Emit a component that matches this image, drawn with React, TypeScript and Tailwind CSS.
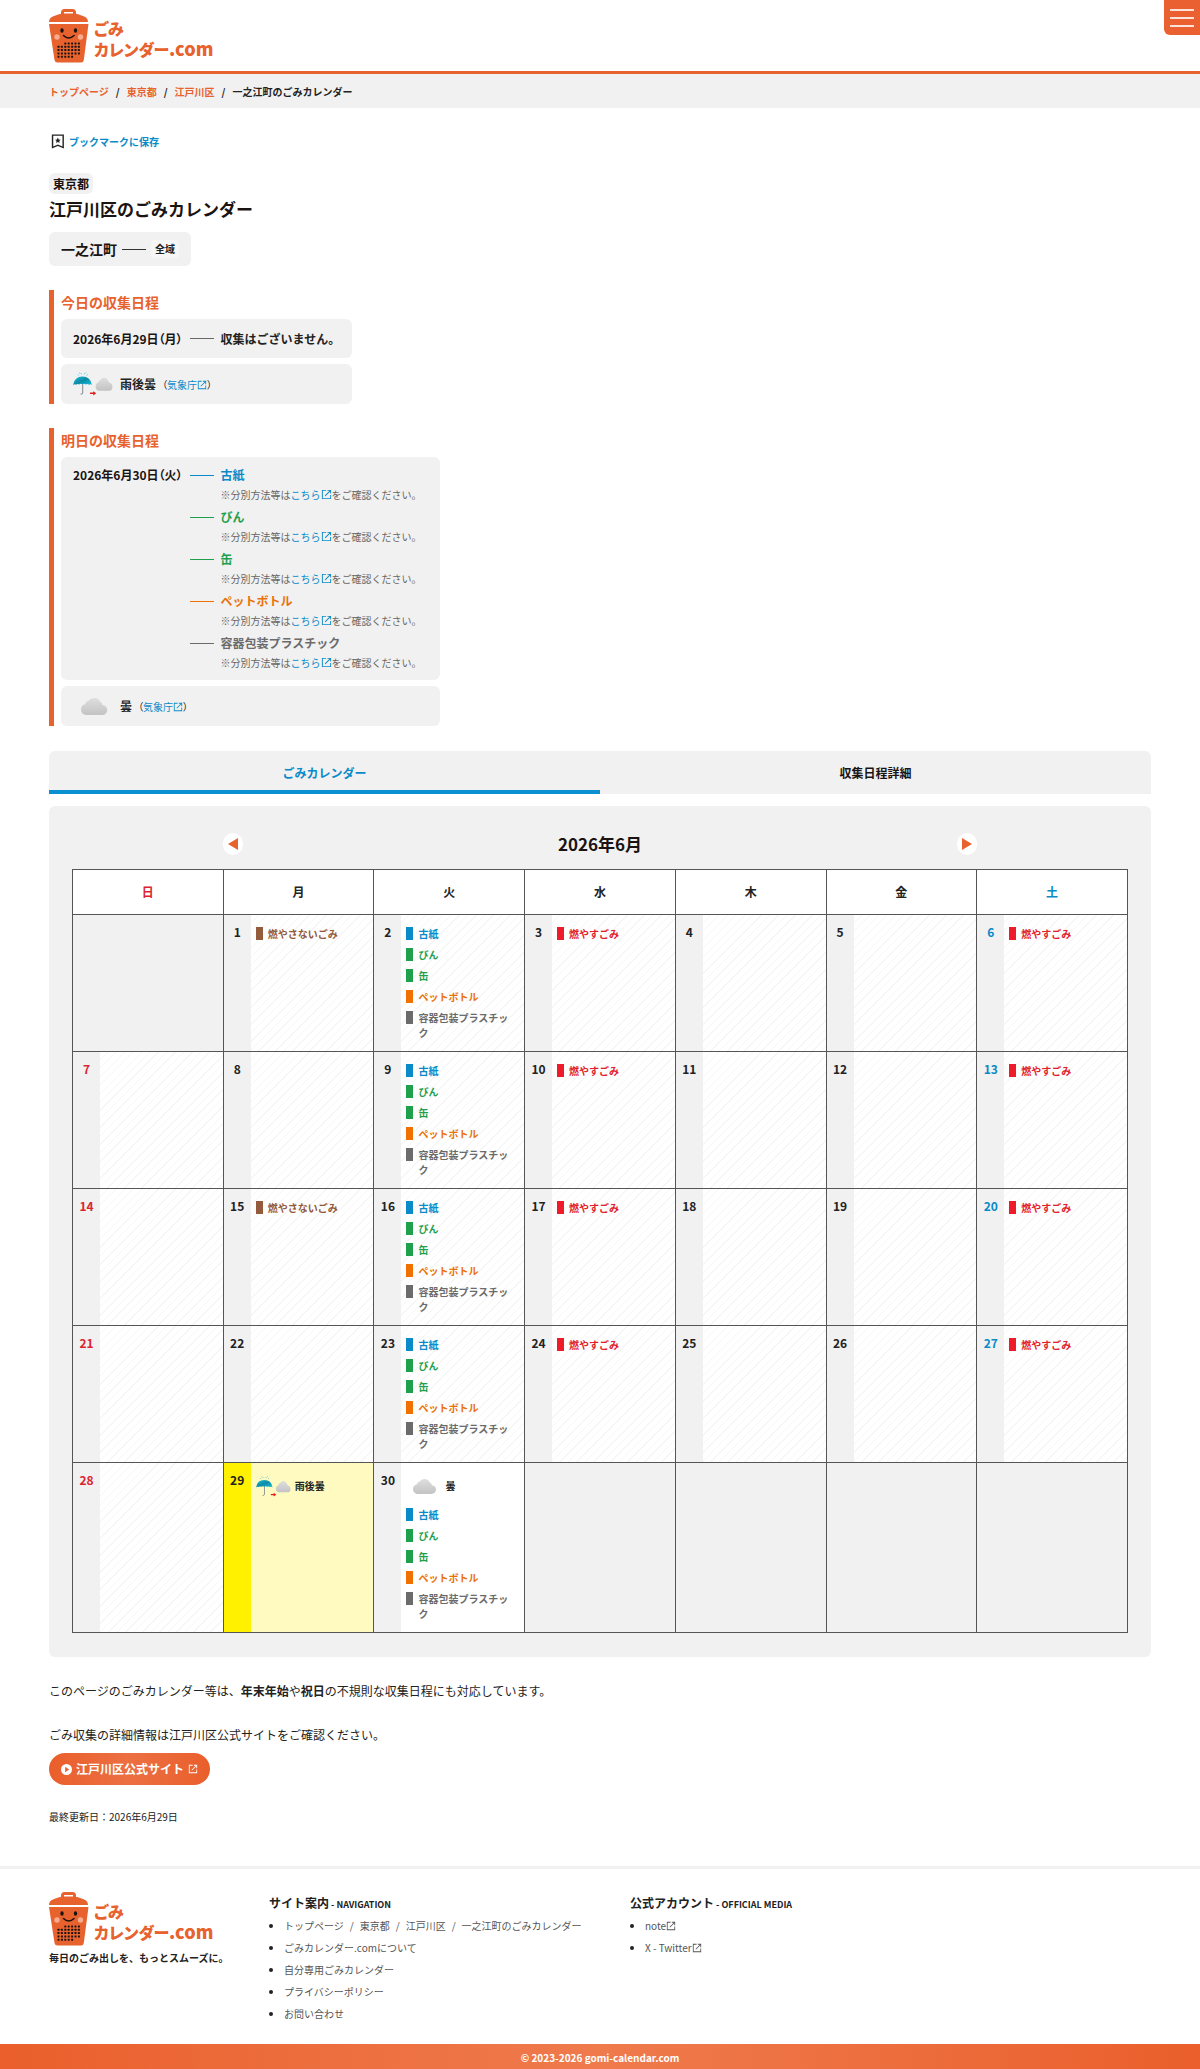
import { useState } from "react";
import type { ReactNode } from "react";

const FONT = "font-['Noto_Sans_CJK_JP',sans-serif]";

type Waste = { name: string; text: string; bar: string };

const PAPER: Waste = { name: "古紙", text: "text-[#0a8ac8]", bar: "bg-[#0a8ac8]" };
const BOTTLE: Waste = { name: "びん", text: "text-[#1fa04d]", bar: "bg-[#1fa04d]" };
const CAN: Waste = { name: "缶", text: "text-[#1fa04d]", bar: "bg-[#1fa04d]" };
const PET: Waste = { name: "ペットボトル", text: "text-[#ea7008]", bar: "bg-[#f07000]" };
const PLASTIC: Waste = { name: "容器包装プラスチック", text: "text-[#6b6b6b]", bar: "bg-[#6b6b6b]" };
const BURNABLE: Waste = { name: "燃やすごみ", text: "text-[#e2202c]", bar: "bg-[#ee1c2a]" };
const NON_BURNABLE: Waste = { name: "燃やさないごみ", text: "text-[#935a3b]", bar: "bg-[#935a3b]" };

const RECYCLE = [PAPER, BOTTLE, CAN, PET, PLASTIC];
const WEEKDAYS = ["日", "月", "火", "水", "木", "金", "土"];
const TODAY = 29;

const TABS = [
  { id: "calendar", label: "ごみカレンダー" },
  { id: "detail", label: "収集日程詳細" },
];

const CRUMBS = [
  { href: "#top", label: "トップページ" },
  { href: "#tokyo", label: "東京都" },
  { href: "#edogawa", label: "江戸川区" },
];

const NAV_LINKS = [
  { href: "#about", label: "ごみカレンダー.comについて" },
  { href: "#my", label: "自分専用ごみカレンダー" },
  { href: "#privacy", label: "プライバシーポリシー" },
  { href: "#contact", label: "お問い合わせ" },
];

// June 2026 starts on a Monday
const WEEKS = [0, 1, 2, 3, 4].map((w) =>
  [0, 1, 2, 3, 4, 5, 6].map((d) => w * 7 + d).map((n) => (n >= 1 && n <= 30 ? n : null))
);

function wasteFor(day: number): Waste[] {
  const weekday = day % 7;
  if (weekday === 2) return RECYCLE;
  if (weekday === 3 || weekday === 6) return [BURNABLE];
  if (day === 1 || day === 15) return [NON_BURNABLE];
  return [];
}

function dayColor(weekday: number) {
  if (weekday === 0) return "text-[#dc2430]";
  if (weekday === 6) return "text-[#0a8ac8]";
  return "text-[#222]";
}

function ExternalIcon({ className = "size-[10px]" }: { className?: string }) {
  return (
    <svg viewBox="0 0 24 24" fill="currentColor" className={`inline-block align-[-1px] ${className}`} aria-hidden="true">
      <path d="M22 22H2V2h9v2H4v16h16v-7h2zM14 2h8v8h-2V5.400L9.700 15.700l-1.400-1.400L18.600 4H14z" />
    </svg>
  );
}

function Logo() {
  return (
    <svg viewBox="0 0 168 56" className="block h-14 w-[168px]" role="img" aria-label="ごみカレンダー.com">
      <g fill="#e8622d">
        <path fillRule="evenodd" d="M12 6V3.500Q12 0 15.500 0h8Q27 0 27 3.500V6zM15 5h9V3h-9z" />
        <path d="M0 13Q0 8.500 5 7l5-1.800q2-.7 5-.7h9q3 0 5 .7L34 7q5 1.500 5 6z" />
        <path d="M0 15h39.500l-4.700 36Q34.500 53.500 32 53.500H8.500Q6 53.500 5.500 51z" />
      </g>
      <g fill="#1a1311">
        <ellipse cx="13" cy="21.500" rx="1.700" ry="2.300" />
        <ellipse cx="26.500" cy="21.500" rx="1.700" ry="2.300" />
        {[0, 1, 2, 3, 4].map((row) =>
          [0, 1, 2, 3, 4, 5, 6].map((col) =>
            (row === 0 && col < 2) || (row === 4 && col > 4) ? null : (
              <rect key={`${row}-${col}`} x={8.500 + col * 3.400} y={33.500 + row * 3.300} width="2" height="2" rx=".4" />
            )
          )
        )}
      </g>
      <path d="M14.500 26.500q5.200 5 10.500 0" fill="none" stroke="#1a1311" strokeWidth="1.600" strokeLinecap="round" />
      <circle cx="8" cy="28" r="2.700" fill="#f6ac8f" />
      <circle cx="31.500" cy="28" r="2.700" fill="#f6ac8f" />
      <g fill="#e8622d" className="font-['Noto_Sans_CJK_JP',sans-serif] font-black [font-feature-settings:'palt']">
        <text x="45" y="26" fontSize="16">ごみ</text>
        <text x="45" y="47" fontSize="16">カレンダー</text>
        <text x="120" y="47" fontSize="18">.com</text>
      </g>
    </svg>
  );
}

function Cloud() {
  return (
    <>
      <linearGradient id="cloud" x1="0" y1="0" x2="0" y2="1">
        <stop offset="0" stopColor="#dedede" />
        <stop offset="1" stopColor="#c3c3c3" />
      </linearGradient>
      <path
        fill="url(#cloud)"
        d="M5.500 18A5.500 5.500 0 0 1 5 7.300 5.500 5.500 0 0 1 9 3.500 6.500 6.500 0 0 1 20 4.500 5 5 0 0 1 22.500 8 5 5 0 0 1 22 18z"
      />
    </>
  );
}

function CloudyIcon({ className }: { className: string }) {
  return (
    <svg viewBox="0 0 40 24" className={className} role="img" aria-label="曇">
      <g transform="translate(7 3)">
        <Cloud />
      </g>
    </svg>
  );
}

function RainThenCloudyIcon({ className }: { className: string }) {
  return (
    <svg viewBox="0 0 40 24" className={className} role="img" aria-label="雨後曇">
      <linearGradient id="umbrella" x1="0" y1="0" x2="1" y2="1">
        <stop offset="0" stopColor="#12c4e0" />
        <stop offset=".5" stopColor="#0f8aa6" />
        <stop offset="1" stopColor="#12c4e0" />
      </linearGradient>
      <path d="M9.700 11v10q-.200 1.700-2.200 1" fill="none" stroke="#858b90" strokeWidth="1" />
      <path
        fill="url(#umbrella)"
        d="M0 13Q1.500 4.500 9.500 4.500T19 13q-1.500-1.300-3-.3-1.600-1.400-3.200-.3-1.600-1.400-3.300-.2-1.600-1.200-3.300.2-1.600-1.100-3.200.3-1.500-1-3 .3z"
      />
      <path d="M5 2.500l.6 1M8 1.200l.2 1M11.500 1.200l-.2 1M14.500 2.500l-.6 1M6.500.500v.8M13 .500v.8" stroke="#4fc3dc" strokeWidth=".9" />
      <path fill="#e0201c" d="M17 20.500h3.200v-1.300l3 2.100-3 2.100v-1.300H17z" />
      <g transform="translate(22 5) scale(.64 .76)">
        <Cloud />
      </g>
    </svg>
  );
}

// Full-width brackets set with their proportional widths
function Bracket({ children }: { children: string }) {
  return <span className="[font-feature-settings:'palt']">{children}</span>;
}

function WeatherRow({ icon, label }: { icon: ReactNode; label: string }) {
  return (
    <div className="flex h-10 items-center rounded-md bg-[#f1f1f1] px-3">
      {icon}
      <span className="ml-[7px] text-[12px] font-bold">{label}</span>
      <span className="ml-[6px] text-[10px]">
        <Bracket>（</Bracket>
        <a href="#jma" className="text-[#0a8ac8]">
          気象庁
          <ExternalIcon />
        </a>
        <Bracket>）</Bracket>
      </span>
    </div>
  );
}

function CalendarCell({ day, weekday }: { day: number | null; weekday: number }) {
  if (day === null) return <td className="border border-[#555] bg-[#f1f1f1]" />;

  const isToday = day === TODAY;
  const stripe = isToday ? "bg-[#fff100]" : "bg-[#f1f1f1]";
  let body = "bg-[repeating-linear-gradient(135deg,#fff_0_5px,#f6f6f6_5px_6px)]";
  if (isToday) body = "bg-[#fffbc0]";
  if (day > TODAY) body = "bg-white";

  return (
    <td className="h-px border border-[#555] p-0 align-top">
      <div className="flex h-full">
        <div className={`w-[27px] shrink-0 pt-2 text-center text-[12px] leading-[18px] font-bold ${stripe} ${dayColor(weekday)}`}>
          {day}
        </div>
        <div className={`min-w-0 grow py-[11px] pr-2 pl-[5px] ${body}`}>
          {isToday && (
            <div className="flex items-center gap-1 text-[10px] leading-6 font-bold">
              <RainThenCloudyIcon className="h-[21px] w-[35px]" />
              雨後曇
            </div>
          )}
          {day > TODAY && (
            <div className="mb-[9px] flex items-center gap-1 text-[10px] leading-6 font-bold">
              <CloudyIcon className="h-6 w-[35px]" />曇
            </div>
          )}
          {!isToday && (
            <ul className="flex flex-col gap-[6px] text-[10px] leading-[15px] font-bold">
              {wasteFor(day).map((w) => (
                <li key={w.name} className={`flex gap-[5px] ${w.text}`}>
                  <span className={`mt-px h-[13px] w-[7px] shrink-0 ${w.bar}`} />
                  {w.name}
                </li>
              ))}
            </ul>
          )}
        </div>
      </div>
    </td>
  );
}

const sectionBox = "mt-6 flex w-fit flex-col border-l-[5px] border-[#e8622d] pl-[7px]";
const sectionHeading = "mb-[5px] text-[14px] leading-6 font-bold text-[#e8622d]";
const arrowButton = "flex h-[22px] w-5 items-center justify-center rounded-full bg-white";
const footerHeading = "text-[12px] leading-[21px] font-bold";
const footerList = "list-disc pl-[15px] text-[10px] leading-[22px] text-[#555] marker:text-[#222]";

export default function App() {
  const [tab, setTab] = useState("calendar");

  return (
    <div className={`${FONT} bg-white text-[12px] text-[#222]`}>
      <header className="flex items-start justify-between border-b-[3px] border-[#e8622d]">
        <a href="#top" className="ml-[49px] pt-[9px] pb-[6px]">
          <Logo />
        </a>
        <button
          type="button"
          aria-label="メニュー"
          className="flex h-[35px] w-9 flex-col items-center justify-center gap-[6px] rounded-bl-md bg-[#ea6030]"
        >
          <span className="h-[2px] w-6 bg-[#fbe3d8]" />
          <span className="h-[2px] w-6 bg-[#fbe3d8]" />
          <span className="h-[2px] w-6 bg-[#fbe3d8]" />
        </button>
      </header>

      <nav className="flex h-[34px] items-center gap-[7px] bg-[#f1f1f1] px-[49px] text-[10px] font-bold">
        {CRUMBS.map((c) => (
          <span key={c.href} className="flex gap-[7px]">
            <a href={c.href} className="text-[#e8622d]">{c.label}</a>
            <span>/</span>
          </span>
        ))}
        <span>一之江町のごみカレンダー</span>
      </nav>

      <main className="px-[49px] pt-[21px]">
        <button type="button" className="flex h-6 items-center gap-[3px] text-[10px] font-bold text-[#0a8ac8]">
          <svg viewBox="0 0 24 24" className="size-[17px] text-[#222]" fill="currentColor" aria-hidden="true">
            <path d="M4 2h17v20l-8.500-3.600L4 22zM6 4v15l6.500-2.700L19 19V4z" fillRule="evenodd" />
            <path d="M12.500 6.500l1.200 2.600 2.800.3-2.100 1.900.6 2.800-2.500-1.400-2.500 1.400.6-2.800-2.100-1.900 2.800-.3z" />
          </svg>
          ブックマークに保存
        </button>

        <h1 className="mt-5 font-bold text-[#1a1311]">
          <span className="block w-fit rounded-md bg-[#f1f1f1] px-1 text-[12px] leading-[21px]">東京都</span>
          <span className="mt-[3px] block text-[17px] leading-6">江戸川区のごみカレンダー</span>
        </h1>

        <div className="mt-[11px] flex h-[34px] w-fit items-center gap-[5px] rounded-md bg-[#f1f1f1] px-3">
          <span className="text-[14px] font-bold text-[#1a1311]">一之江町</span>
          <span className="h-px w-6 bg-[#333]" />
          <span className="rounded bg-[#f6f6f6] px-1 text-[10px] leading-[18px] font-bold">全域</span>
        </div>

        <section className={sectionBox}>
          <h2 className={sectionHeading}>今日の収集日程</h2>
          <div className="mb-[6px] flex h-[39px] items-center gap-[7px] rounded-md bg-[#f1f1f1] px-3 font-bold">
            <span className="text-[#1a1311]">
              2026年6月29日<Bracket>（月）</Bracket>
            </span>
            <span className="h-px w-6 bg-[#666]" />
            収集はございません。
          </div>
          <WeatherRow icon={<RainThenCloudyIcon className="h-6 w-10" />} label="雨後曇" />
        </section>

        <section className={sectionBox}>
          <h2 className={sectionHeading}>明日の収集日程</h2>
          <div className="mb-[6px] flex gap-[7px] rounded-md bg-[#f1f1f1] pt-2 pr-[18px] pb-[7px] pl-3">
            <span className="leading-5 font-bold text-[#1a1311]">
              2026年6月30日<Bracket>（火）</Bracket>
            </span>
            <ul className="flex flex-col gap-[2px]">
              {RECYCLE.map((w) => (
                <li key={w.name}>
                  <div className={`flex items-center gap-[7px] leading-5 font-bold ${w.text}`}>
                    <span className={`h-px w-6 ${w.bar}`} />
                    {w.name}
                  </div>
                  <p className="pl-[31px] text-[10px] leading-5 text-[#666]">
                    ※分別方法等は
                    <a href="#guide" className="text-[#0a8ac8]">
                      こちら
                      <ExternalIcon className="size-[11px]" />
                    </a>
                    をご確認ください。
                  </p>
                </li>
              ))}
            </ul>
          </div>
          <WeatherRow icon={<CloudyIcon className="h-6 w-10" />} label="曇" />
        </section>

        <div role="tablist" className="mt-[25px] flex overflow-hidden rounded-t-md bg-[#f1f1f1]">
          {TABS.map((t) => (
            <button
              key={t.id}
              type="button"
              role="tab"
              aria-selected={tab === t.id}
              onClick={() => setTab(t.id)}
              className={`h-[43px] flex-1 border-b-4 pt-1 font-bold ${
                tab === t.id ? "border-[#0a90d0] text-[#0a8ac8]" : "border-[#f1f1f1] text-[#1a1311]"
              }`}
            >
              {t.label}
            </button>
          ))}
        </div>

        <div className="mt-3 rounded-md bg-[#f1f1f1] px-[23px] pt-[25px] pb-6">
          <div className="mb-3 grid h-[26px] grid-cols-7 items-center">
            <button type="button" aria-label="前の月" className={`col-start-2 ${arrowButton}`}>
              <svg viewBox="0 0 10 12" className="h-3 w-[10px]">
                <path d="M10 0v12L0 6z" fill="#e8622d" />
              </svg>
            </button>
            <p className="col-span-3 text-center text-[17px] leading-6 font-bold text-[#1a1311]">2026年6月</p>
            <button type="button" aria-label="次の月" className={`justify-self-end ${arrowButton}`}>
              <svg viewBox="0 0 10 12" className="h-3 w-[10px]">
                <path d="M0 0v12l10-6z" fill="#e8622d" />
              </svg>
            </button>
          </div>

          <table className="w-full table-fixed border-collapse bg-white">
            <thead>
              <tr className="h-[45px]">
                {WEEKDAYS.map((d, i) => (
                  <th key={d} scope="col" className={`border border-[#555] text-[12px] font-bold ${dayColor(i)}`}>
                    {d}
                  </th>
                ))}
              </tr>
            </thead>
            <tbody>
              {WEEKS.map((week, w) => (
                <tr key={w} className="h-[137px]">
                  {week.map((day, i) => (
                    <CalendarCell key={i} day={day} weekday={i} />
                  ))}
                </tr>
              ))}
            </tbody>
          </table>
        </div>

        <p className="mt-6 leading-5">
          このページのごみカレンダー等は、<strong>年末年始</strong>や<strong>祝日</strong>の不規則な収集日程にも対応しています。
        </p>
        <p className="mt-6 leading-5">ごみ収集の詳細情報は江戸川区公式サイトをご確認ください。</p>
        <a
          href="#official"
          className="mt-2 flex h-8 w-fit items-center gap-1 rounded-full bg-linear-to-r from-[#ea5f2b] via-[#ec6f42] to-[#ea5f2b] px-3 font-bold text-white"
        >
          <svg viewBox="0 0 12 12" className="size-[11px]" aria-hidden="true">
            <path fill="#fff" fillRule="evenodd" d="M6 0a6 6 0 1 1 0 12A6 6 0 0 1 6 0zM4.500 3v6L9 6z" />
          </svg>
          江戸川区公式サイト
          <ExternalIcon />
        </a>
        <p className="mt-6 text-[10px] leading-4">最終更新日：2026年6月29日</p>
      </main>

      <footer className="mt-[41px] border-t-[3px] border-[#f1f1f1]">
        <div className="flex px-[49px] pt-[23px] pb-[19px]">
          <div className="w-[220px]">
            <a href="#top">
              <Logo />
            </a>
            <p className="mt-[2px] text-[10px] leading-[15px] font-bold">毎日のごみ出しを、もっとスムーズに。</p>
          </div>
          <div className="w-[361px]">
            <h2 className={footerHeading}>
              サイト案内<small className="text-[9px]"> - NAVIGATION</small>
            </h2>
            <ul className={footerList}>
              <li>
                {CRUMBS.map((c) => (
                  <span key={c.href}>
                    <a href={c.href}>{c.label}</a>
                    <span className="mx-[6px]">/</span>
                  </span>
                ))}
                一之江町のごみカレンダー
              </li>
              {NAV_LINKS.map((l) => (
                <li key={l.href}>
                  <a href={l.href}>{l.label}</a>
                </li>
              ))}
            </ul>
          </div>
          <div>
            <h2 className={footerHeading}>
              公式アカウント<small className="text-[9px]"> - OFFICIAL MEDIA</small>
            </h2>
            <ul className={footerList}>
              <li>
                <a href="#note">note<ExternalIcon /></a>
              </li>
              <li>
                <a href="#x">X - Twitter<ExternalIcon /></a>
              </li>
            </ul>
          </div>
        </div>
        <p className="bg-linear-to-r from-[#ea5f2b] via-[#ef7a4c] to-[#ea5f2b] text-center text-[10px] leading-[27px] font-bold text-white">
          © 2023-2026 gomi-calendar.com
        </p>
      </footer>
    </div>
  );
}
